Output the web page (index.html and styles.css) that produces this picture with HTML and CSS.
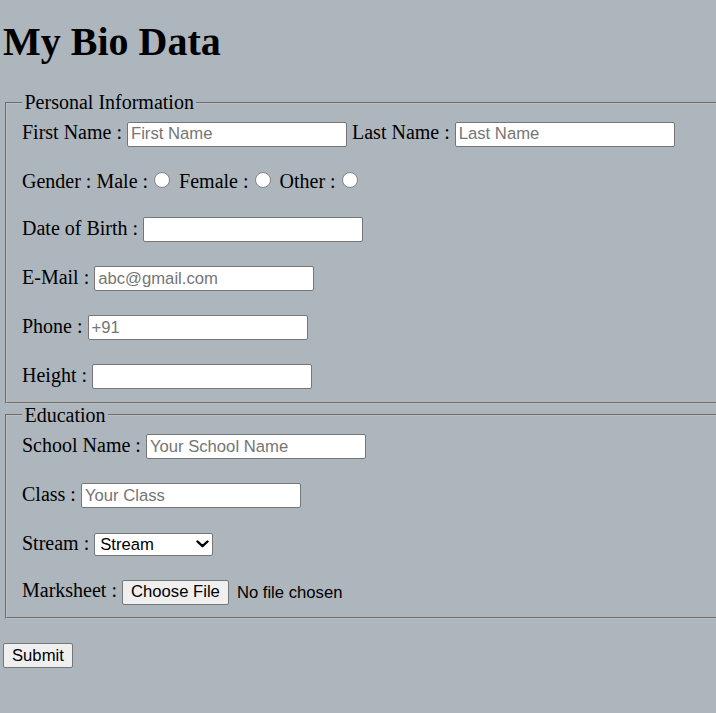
FILE: index.html
```html
<!DOCTYPE html>
<html lang="en">
<head>
<meta charset="utf-8">
<title>My Bio Data</title>
<link rel="stylesheet" href="styles.css">
</head>
<body>
<div class="page">
  <h1 class="title">My Bio Data</h1>
  <form class="bio-form">
    <fieldset class="group">
      <legend class="group-title">Personal Information</legend>
      <div class="rows">
        <div class="row">First Name : <input class="field" type="text" placeholder="First Name"> Last Name : <input class="field" type="text" placeholder="Last Name"></div>
        <div class="row">Gender : Male :<input class="radio" type="radio" name="gender"> Female :<input class="radio" type="radio" name="gender"> Other :<input class="radio" type="radio" name="gender"></div>
        <div class="row">Date of Birth : <input class="field" type="text"></div>
        <div class="row">E-Mail : <input class="field" type="text" placeholder="abc@gmail.com"></div>
        <div class="row">Phone : <input class="field" type="text" placeholder="+91"></div>
        <div class="row">Height : <input class="field" type="text"></div>
      </div>
    </fieldset>
    <fieldset class="group">
      <legend class="group-title">Education</legend>
      <div class="rows">
        <div class="row">School Name : <input class="field" type="text" placeholder="Your School Name"></div>
        <div class="row">Class : <input class="field" type="text" placeholder="Your Class"></div>
        <div class="row">Stream : <span class="select-wrap"><select class="select"><option>Stream</option><option>Science</option><option>Commerce</option><option>Arts</option></select><svg class="chevron" viewBox="0 0 13 8" aria-hidden="true"><polyline points="1.5,1.5 6.5,6.2 11.5,1.5" fill="none" stroke="#000" stroke-width="2.4" stroke-linecap="round" stroke-linejoin="round"/></svg></span></div>
        <div class="row">Marksheet : <input class="file" type="file"></div>
      </div>
    </fieldset>
    <div class="actions">
      <button class="btn" type="submit">Submit</button>
    </div>
  </form>
</div>
</body>
</html>
```

FILE: styles.css
```css
html, body {
  margin: 0;
  padding: 0;
}

body {
  background: #adb5bd;
  color: #000;
  font-family: "Liberation Serif", "Times New Roman", serif;
  font-size: 20px;
}

.page {
  padding: 0 3px;
  overflow: hidden;
}

.title {
  font-size: 40px;
  font-weight: bold;
  line-height: normal;
  margin: 17.5px 0 26.8px;
}

.bio-form {
  width: 790px;
}

.group {
  margin: 0 2px;
  padding: 7px 15px 12.5px;
  border: 2px groove #c0c0c0;
  min-width: 0;
}

.group-title {
  padding: 0 2.5px;
}

.rows {
  display: flex;
  flex-direction: column;
  gap: 23.5px;
}

.row {
  white-space: nowrap;
  line-height: normal;
}

.field {
  box-sizing: border-box;
  width: 220px;
  height: 25px;
  margin: 0;
  padding: 0 3px;
  border: 1px solid #767676;
  border-radius: 2px;
  background: #fff;
  color: #000;
  font: 16.67px "Liberation Sans", Arial, sans-serif;
  vertical-align: baseline;
}

.field::placeholder {
  color: #757575;
}

.radio {
  appearance: none;
  -webkit-appearance: none;
  box-sizing: border-box;
  width: 16px;
  height: 16px;
  margin: 0 3.75px 0 6.25px;
  border: 1px solid #858585;
  border-radius: 50%;
  background: #fff;
  vertical-align: baseline;
}

.select-wrap {
  position: relative;
  display: inline-block;
}

.select {
  appearance: none;
  -webkit-appearance: none;
  box-sizing: border-box;
  width: 119px;
  height: 23px;
  margin: 0;
  padding: 0 0 0 5px;
  border: 1px solid #767676;
  border-radius: 2px;
  background: #fff;
  color: #000;
  font: 16.67px "Liberation Sans", Arial, sans-serif;
}

.chevron {
  position: absolute;
  right: 4px;
  top: 8px;
  width: 13px;
  height: 8px;
  pointer-events: none;
}

.file {
  width: 240px;
  margin: 0;
  color: #000;
  font: 16.67px "Liberation Sans", Arial, sans-serif;
}

.file::file-selector-button {
  box-sizing: border-box;
  height: 25px;
  margin: 0 8px 0 0;
  padding: 0 8px;
  border: 1px solid #767676;
  border-radius: 2px;
  background: #efefef;
  color: #000;
  font: inherit;
}

.actions {
  display: flex;
  margin-top: 24px;
}

.btn {
  box-sizing: border-box;
  height: 25px;
  margin: 0;
  padding: 0 8px;
  border: 1px solid #767676;
  border-radius: 2px;
  background: #efefef;
  color: #000;
  font: 16.67px "Liberation Sans", Arial, sans-serif;
}
```
